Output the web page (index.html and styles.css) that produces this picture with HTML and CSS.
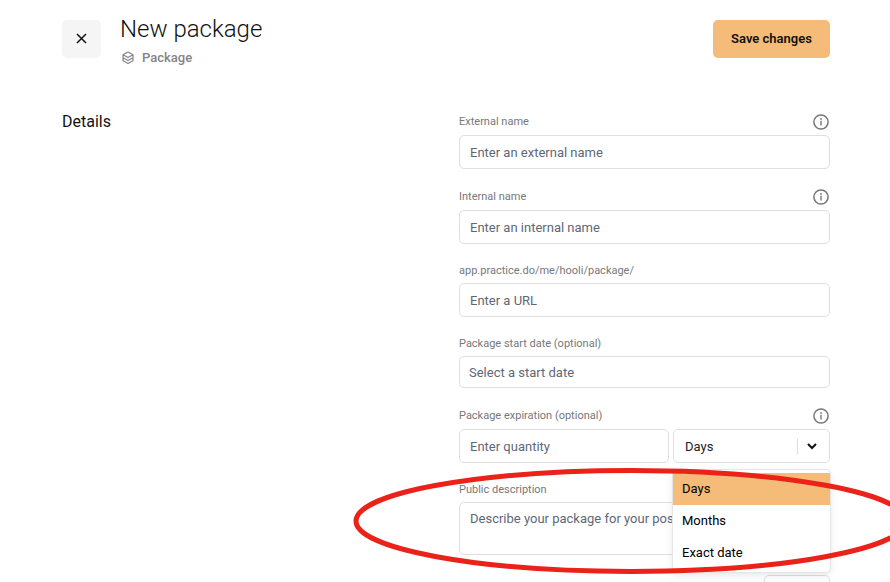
FILE: index.html
```html
<!DOCTYPE html>
<html lang="en">

<head>
  <meta charset="UTF-8" />
  <meta name="viewport" content="width=device-width,initial-scale=1" />
  <title>New package</title>
  <link rel="stylesheet" href="styles.css">
</head>

<body>
  <svg class="icon-defs" aria-hidden="true">
    <symbol id="icon-info" viewBox="0 0 16 16">
      <circle cx="8" cy="8" r="7.1" fill="none" stroke="currentColor" stroke-width="1.5" />
      <path d="M8 6.8v4.8" fill="none" stroke="currentColor" stroke-width="1.4" />
      <circle cx="8" cy="4.9" r=".9" fill="currentColor" />
    </symbol>
  </svg>

  <form class="page">
    <header class="header">
      <button type="button" class="close" aria-label="Close">
        <svg width="11" height="11" viewBox="0 0 11 11"><path d="M1 1l9 9M10 1l-9 9" /></svg>
      </button>
      <div class="heading">
        <h1>New package</h1>
        <p class="kind">
          <svg width="14" height="14" viewBox="0 0 14 14">
            <path d="M7 1l5 2.8-5 2.8-5-2.8zM2 3.8v3L7 9.6l5-2.8v-3M2 7.2v2.6l5 2.8 5-2.8V7.2" />
          </svg>
          Package
        </p>
      </div>
      <button type="submit" class="save">Save changes</button>
    </header>

    <section class="details">
      <h2>Details</h2>
      <div class="fields">
        <div class="field">
          <div class="label-row">
            <label for="external">External name</label>
            <svg class="info"><use href="#icon-info" /></svg>
          </div>
          <input type="text" id="external" placeholder="Enter an external name">
        </div>
        <div class="field">
          <div class="label-row">
            <label for="internal">Internal name</label>
            <svg class="info"><use href="#icon-info" /></svg>
          </div>
          <input type="text" id="internal" placeholder="Enter an internal name">
        </div>
        <div class="field">
          <div class="label-row">
            <label for="url">app.practice.do/me/hooli/package/</label>
          </div>
          <input type="text" id="url" placeholder="Enter a URL">
        </div>
        <div class="field">
          <div class="label-row">
            <label for="start">Package start date (optional)</label>
          </div>
          <input type="text" id="start" class="date" placeholder="Select a start date">
        </div>
        <div class="field">
          <div class="label-row">
            <label for="quantity">Package expiration (optional)</label>
            <svg class="info"><use href="#icon-info" /></svg>
          </div>
          <div class="expiration">
            <input type="text" id="quantity" placeholder="Enter quantity">
            <div class="unit">
              <select aria-label="Expiration unit">
                <option>Days</option>
              </select>
              <span class="arrow">
                <svg width="10" height="7" viewBox="0 0 10 7"><path d="M1 1l4 4 4-4" /></svg>
              </span>
              <ul class="menu" role="listbox" aria-label="Expiration unit">
                <li role="option" aria-selected="true" class="selected">Days</li>
                <li role="option" aria-selected="false">Months</li>
                <li role="option" aria-selected="false">Exact date</li>
              </ul>
            </div>
          </div>
        </div>
        <div class="field">
          <div class="label-row">
            <label for="description">Public description</label>
          </div>
          <textarea id="description" placeholder="Describe your package for your possible clients"></textarea>
        </div>
        <button type="button" class="more"></button>
      </div>
    </section>

    <!-- hand-drawn highlight over the description -->
    <svg class="highlight" width="556" height="108" viewBox="0 0 556 108" aria-hidden="true">
      <ellipse cx="278" cy="54" rx="275" ry="50.5" />
    </svg>
  </form>
</body>

</html>
```
FILE: styles.css
```css
* {
  box-sizing: border-box;
}

body {
  margin: 0;
  background: #fff;
  color: #111;
}

body,
button,
input,
select,
textarea {
  font-family: Roboto, "Liberation Sans", sans-serif;
  font-size: 13px;
}

.icon-defs {
  display: none;
}

.page {
  position: relative;
  height: 100vh;
  padding: 20px 60px 0 62px;
  overflow: hidden;
}

/* Header */
.header {
  display: flex;
  align-items: flex-start;
  height: 94px;
}

.close,
.save {
  height: 38px;
  padding: 0 0 2px;
  border: none;
  border-radius: 5px;
  cursor: pointer;
}

.close {
  display: flex;
  align-items: center;
  justify-content: center;
  width: 39px;
  background: #f5f5f5;
}

.close svg,
.arrow svg,
.kind svg {
  fill: none;
  stroke: #111;
  stroke-width: 1.5;
}

.save {
  width: 117px;
  background: #f4bb79;
  color: #111;
  font-weight: 600;
}

.heading {
  flex: 1;
  padding-left: 19px;
}

h1 {
  margin: 0;
  font-size: 24px;
  font-weight: 300;
  line-height: 18px;
}

.kind {
  display: flex;
  align-items: center;
  gap: 7px;
  margin: 12px 0 0 1px;
  color: #848488;
  font-weight: 500;
  line-height: 16px;
}

.kind svg {
  stroke: #848488;
  stroke-width: 1.2;
  stroke-linejoin: round;
}

/* Form */
.details {
  display: grid;
  grid-template-columns: 397fr 371fr;
}

h2 {
  margin: 0;
  font-size: 16px;
  font-weight: 400;
  line-height: 16px;
}

.fields {
  display: flex;
  flex-direction: column;
  gap: 20px;
}

.label-row {
  display: flex;
  align-items: center;
  justify-content: space-between;
  margin-bottom: 5px;
  padding-right: 1px;
  color: #77777b;
  font-size: 11px;
  line-height: 14px;
}

.info {
  width: 16px;
  height: 16px;
}

input,
select,
textarea {
  display: block;
  width: 100%;
  height: 34px;
  padding: 0 10px;
  border: 1px solid #dfdfe1;
  border-radius: 5px;
  background: #fff;
  color: #222;
  outline: none;
}

input.date {
  height: 32px;
  padding-left: 9px;
}

::placeholder {
  color: #5f6777;
  opacity: 1;
}

textarea {
  height: 53px;
  padding-top: 8px;
  line-height: 16px;
  resize: none;
  white-space: nowrap;
  overflow: hidden;
}

.expiration {
  display: grid;
  grid-template-columns: 210fr 157fr;
  gap: 4px;
}

.unit {
  position: relative;
}

select {
  appearance: none;
  padding-left: 11px;
}

.arrow {
  position: absolute;
  top: 9px;
  right: 0;
  display: flex;
  align-items: center;
  justify-content: center;
  width: 33px;
  height: 16px;
  padding-right: 5px;
  border-left: 1px solid #dfdfe1;
  pointer-events: none;
}

.arrow svg {
  stroke-width: 2;
}

.menu {
  position: absolute;
  z-index: 1;
  top: 41px;
  left: 0;
  right: 0;
  margin: 0;
  padding: 3px 0;
  border-radius: 4px;
  background: #fff;
  box-shadow: 0 0 0 1px #e4e4e6, 0 3px 8px rgba(0, 0, 0, 0.1);
  color: #000;
  list-style: none;
}

.menu li {
  padding: 0 9px;
  line-height: 32px;
}

.menu .selected {
  background: #f4bb79;
}

.more {
  align-self: flex-end;
  width: 66px;
  height: 34px;
  border: 1px solid #dfdfe1;
  border-radius: 5px;
  background: #fff;
}

.highlight {
  position: absolute;
  z-index: 2;
  top: 467px;
  left: 353px;
  pointer-events: none;
}

.highlight ellipse {
  fill: none;
  stroke: #ea2219;
  stroke-width: 5;
}
```
